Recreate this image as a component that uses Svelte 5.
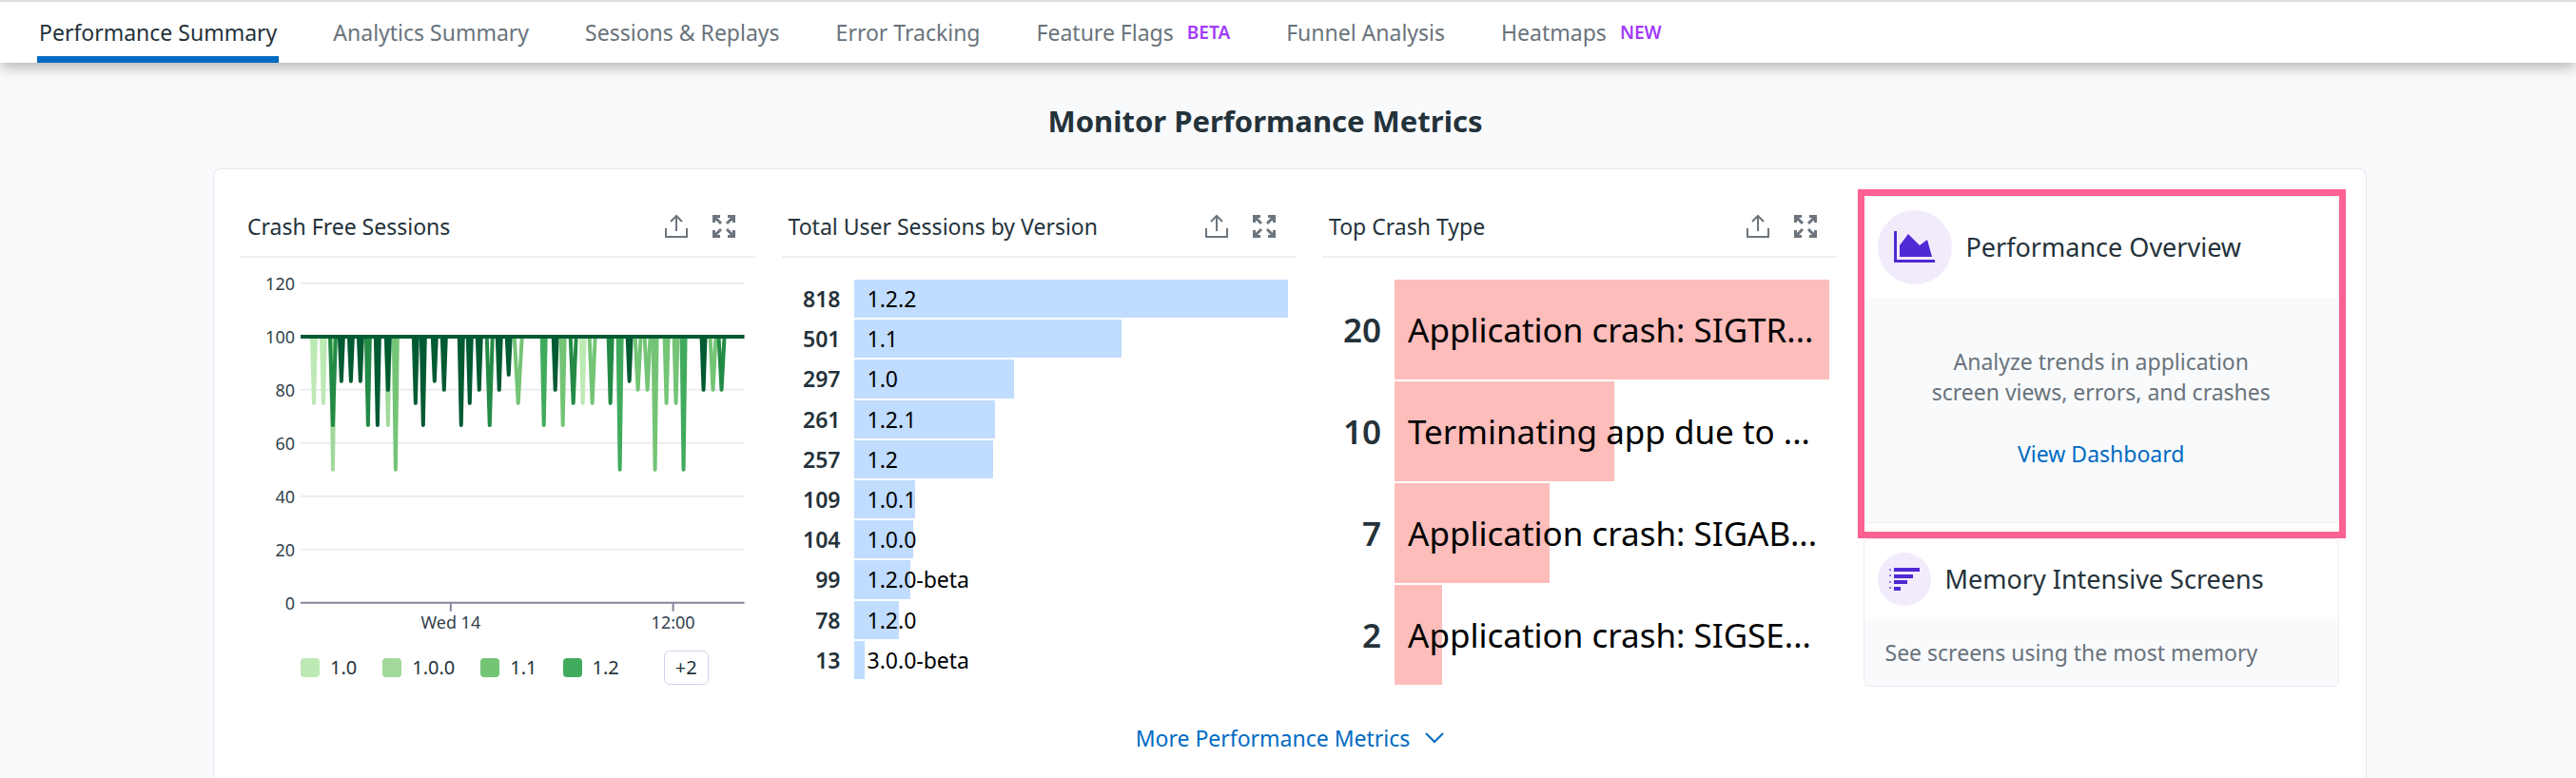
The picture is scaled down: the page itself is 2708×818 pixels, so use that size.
<script>
  const tabs = [
    { label: 'Performance Summary', active: true },
    { label: 'Analytics Summary' },
    { label: 'Sessions & Replays' },
    { label: 'Error Tracking' },
    { label: 'Feature Flags', tag: 'BETA' },
    { label: 'Funnel Analysis' },
    { label: 'Heatmaps', tag: 'NEW' }
  ];

  const versions = [
    [818, '1.2.2'], [501, '1.1'], [297, '1.0'], [261, '1.2.1'], [257, '1.2'],
    [109, '1.0.1'], [104, '1.0.0'], [99, '1.2.0-beta'], [78, '1.2.0'], [13, '3.0.0-beta']
  ];
  const crashes = [
    [20, 'Application crash: SIGTR...'],
    [10, 'Terminating app due to ...'],
    [7, 'Application crash: SIGAB...'],
    [2, 'Application crash: SIGSE...']
  ];
  // Every bar keeps a 1% stub so that small counts stay visible.
  const share = (value, max) => 1 + (99 * value) / max;

  const greens = { a: '#bce9b4', b: '#a1d99b', c: '#74c476', d: '#41ab5d', e: '#238b45', f: '#005a32' };
  const legend = [['1.0', greens.a], ['1.0.0', greens.b], ['1.1', greens.c], ['1.2', greens.d]];

  const yOf = (v) => 363 - 2.8 * v;
  const gridValues = [120, 100, 80, 60, 40, 20];
  // x position, lowest value, series, half width of the dip
  const dips = [
    [77, 75, 'a', 2], [87, 75, 'a', 2], [97, 50, 'b', 2], [97, 66.7, 'e', 3],
    [106, 83.3, 'f', 2], [116, 83.3, 'f', 2], [126, 83.3, 'f', 2], [134, 66.7, 'e', 2],
    [144, 66.7, 'f', 2], [155, 66.7, 'b', 2], [155, 80, 'f', 2], [163, 50, 'c', 2],
    [184, 75, 'f', 2], [192, 66.7, 'f', 2], [204, 83.3, 'f', 2], [214, 80, 'f', 2],
    [232, 66.7, 'f', 2], [241, 75, 'f', 2], [251, 80, 'f', 2], [262, 66.7, 'e', 3],
    [272, 80, 'f', 2], [282, 85.7, 'f', 2], [292, 75, 'c', 4], [319, 66.7, 'd', 2],
    [331, 80, 'f', 2], [339, 66.7, 'c', 2], [350, 75, 'e', 3], [360, 75, 'a', 2],
    [370, 75, 'c', 3], [389, 75, 'e', 2], [399, 50, 'd', 2], [409, 83.3, 'f', 2],
    [418, 80, 'c', 3], [428, 80, 'c', 3], [436, 50, 'c', 2], [448, 75, 'c', 2],
    [458, 75, 'c', 2], [466, 50, 'd', 2], [487, 80, 'f', 2], [497, 80, 'c', 3],
    [506, 80, 'e', 3]
  ];
</script>

{#snippet tools(name)}
  <div class="tools">
    <button aria-label="Share {name}">
      <svg width="26" height="26" viewBox="0 0 26 26" fill="none" stroke="#6c757d" stroke-width="2">
        <path d="M2 15V24H24V15M13 18V2M7 8L13 2L19 8" />
      </svg>
    </button>
    <button aria-label="Expand {name}">
      <svg width="26" height="26" viewBox="0 0 26 26" fill="none" stroke="#6c757d" stroke-width="3">
        <path d="M2.500 9V2.500H9M3 3L10 10M17 2.500H23.500V9M23 3L16 10M2.500 17V23.500H9M3 23L10 16M17 23.500H23.500V17M23 23L16 16" />
      </svg>
    </button>
  </div>
{/snippet}

{#snippet toplist(rows, kind)}
  <ol class="toplist {kind}">
    {#each rows as [count, label]}
      <li>
        <strong>{count}</strong>
        <div class="track">
          <div class="bar" style="width: {share(count, rows[0][0])}%"><span>{label}</span></div>
        </div>
      </li>
    {/each}
  </ol>
{/snippet}

<div class="page">
  <nav>
    {#each tabs as tab}
      <a href="#top" class:active={tab.active}>{tab.label}{#if tab.tag}<span class="tag">{tab.tag}</span>{/if}</a>
    {/each}
  </nav>

  <main>
    <h1>Monitor Performance Metrics</h1>

    <div class="panel">
      <div class="columns">
        <section>
          <header><h2>Crash Free Sessions</h2>{@render tools('Crash Free Sessions')}</header>
          <svg class="chart" viewBox="0 0 541 400" role="img" aria-label="Crash free sessions by version">
            {#each gridValues as v}
              <line x1="63" x2="530" y1={yOf(v)} y2={yOf(v)} stroke="#ececee" stroke-width="2" />
              <text x="57" y={yOf(v) + 7} text-anchor="end">{v}</text>
            {/each}
            <text x="57" y={yOf(0) + 7} text-anchor="end">0</text>
            {#each dips as [x, low, series, half]}
              <polyline
                points="{x - half},{yOf(100)} {x},{yOf(low)} {x + half},{yOf(100)}"
                fill="none" stroke={greens[series]} stroke-width="4" stroke-linecap="round" stroke-linejoin="round" />
            {/each}
            <line x1="63" x2="530" y1={yOf(100)} y2={yOf(100)} stroke={greens.f} stroke-width="4" />
            <path d="M63 363H530M221 363V372M455 363V372" stroke="#85869b" stroke-width="2" />
            <text x="221" y="390" text-anchor="middle">Wed 14</text>
            <text x="455" y="390" text-anchor="middle">12:00</text>
          </svg>
          <div class="legend">
            {#each legend as [name, color]}
              <span class="key"><i style="background: {color}"></i>{name}</span>
            {/each}
            <button class="more-keys">+2</button>
          </div>
        </section>

        <section>
          <header><h2>Total User Sessions by Version</h2>{@render tools('Total User Sessions by Version')}</header>
          {@render toplist(versions, 'blue')}
        </section>

        <section>
          <header><h2>Top Crash Type</h2>{@render tools('Top Crash Type')}</header>
          {@render toplist(crashes, 'red')}
        </section>

        <aside>
          <article class="card featured">
            <div class="card-head">
              <span class="disc large">
                <svg width="44" height="34" viewBox="0 0 44 34" fill="#4f29d3">
                  <path d="M0 0H3V30H43V33H0Z" />
                  <path d="M6 15L15 3L27 15L35 9L40 27H6Z" />
                </svg>
              </span>
              <h3>Performance Overview</h3>
            </div>
            <div class="card-body centered">
              <p>Analyze trends in application<br />screen views, errors, and crashes</p>
              <a href="#dashboard">View Dashboard</a>
            </div>
          </article>
          <article class="card">
            <div class="card-head">
              <span class="disc">
                <svg width="32" height="24" viewBox="0 0 32 24" fill="#4f29d3">
                  <path d="M5 0H32V4H5ZM5 7H25V11H5ZM5 13H19V17H5ZM5 20H12V24H5Z" />
                  <path d="M0 1H2V3H0ZM0 7H2V9H0ZM0 14H2V16H0ZM0 20H2V22H0Z" opacity="0.6" />
                </svg>
              </span>
              <h3>Memory Intensive Screens</h3>
            </div>
            <div class="card-body"><p>See screens using the most memory</p></div>
          </article>
        </aside>
      </div>

      <button class="more">
        More Performance Metrics
        <svg width="20" height="12" viewBox="0 0 20 12" fill="none" stroke="#006bc2" stroke-width="2"><path d="M1 1L10 10L19 1" /></svg>
      </button>
    </div>
  </main>
</div>

<style>
  :global(body) {
    background: #f9fafc;
    overflow: hidden;
  }
  .page {
    min-height: 100vh;
    display: flex;
    flex-direction: column;
    font-family: 'Noto Sans', sans-serif;
    font-size: 23px;
    line-height: 32px;
    color: #24323a;
  }
  a {
    color: #006bc2;
    text-decoration: none;
  }
  button {
    font: inherit;
    background: none;
    border: 0;
    padding: 0;
    cursor: pointer;
  }
  h1, h2, h3, p, ol {
    margin: 0;
    padding: 0;
  }
  nav {
    display: flex;
    gap: 55px;
    height: 64px;
    padding: 0 39px;
    border-top: 2px solid #dcdcdc;
    background: #fff;
    box-shadow: 0 4px 14px rgba(0, 0, 0, 0.3);
  }
  nav a {
    display: flex;
    align-items: center;
    box-sizing: border-box;
    padding: 7px 2px 0;
    border-bottom: 7px solid transparent;
    color: #69737b;
  }
  nav a.active {
    color: #24323a;
    border-color: #006bc2;
  }
  .tag {
    margin-left: 14px;
    font-size: 19px;
    font-weight: 600;
    color: #a23bf8;
  }
  main {
    flex: 1;
    display: flex;
    flex-direction: column;
    padding: 39px 220px 0 224px;
  }
  h1 {
    padding-right: 52px;
    text-align: center;
    font-size: 31px;
    line-height: 44px;
    font-weight: 700;
  }
  .panel {
    flex: 1;
    margin-top: 28px;
    padding: 28px 28px 0;
    background: #fff;
    border: 1px solid #e8e9f1;
    border-bottom: 0;
    border-radius: 8px 8px 0 0;
    text-align: center;
  }
  .columns {
    display: grid;
    grid-template-columns: 540fr 540fr 540fr 500fr;
    gap: 28px;
    text-align: left;
  }
  section {
    min-width: 0;
  }
  header {
    display: flex;
    align-items: center;
    justify-content: space-between;
    height: 63px;
    padding: 0 20px 0 7px;
    border-bottom: 2px solid #f0f0f5;
  }
  h2 {
    font-size: 23px;
    font-weight: 400;
  }
  .tools {
    display: flex;
    gap: 24px;
  }
  .tools svg, .chart, .disc svg {
    display: block;
  }
  .chart {
    width: 100%;
    height: auto;
    font-size: 18px;
    fill: #33414a;
  }
  .legend {
    display: flex;
    align-items: center;
    gap: 27px;
    margin-top: 13px;
    padding-left: 63px;
    font-size: 20px;
  }
  .key {
    display: flex;
    align-items: center;
    gap: 11px;
  }
  .key i {
    width: 20px;
    height: 20px;
    border-radius: 4px;
  }
  .more-keys {
    box-sizing: border-box;
    width: 47px;
    height: 36px;
    margin-left: 20px;
    border: 1px solid #cfd3e8;
    border-radius: 6px;
    color: #24323a;
  }
  .toplist {
    display: grid;
    grid-auto-rows: 1fr;
    gap: 2px;
    margin-top: 23px;
    padding-right: 8px;
    list-style: none;
  }
  .toplist li {
    display: grid;
    grid-template-columns: 62px 1fr;
    gap: 14px;
  }
  .toplist strong {
    align-self: center;
    text-align: right;
    font-weight: 600;
  }
  .bar {
    display: flex;
    align-items: center;
    height: 100%;
    color: #000;
    white-space: nowrap;
  }
  .bar span {
    padding-left: 14px;
  }
  .blue {
    height: 420px;
  }
  .blue .bar {
    background: #c0dcfe;
  }
  .red {
    height: 426px;
    font-size: 35px;
  }
  .red .bar {
    background: #fcbdbb;
  }
  aside {
    display: flex;
    flex-direction: column;
    gap: 16px;
  }
  .card {
    position: relative;
    border: 1px solid #ebebf2;
    border-radius: 6px;
  }
  .featured::after {
    content: '';
    position: absolute;
    z-index: 1;
    inset: -8px -8px -17px -7px;
    border: 7px solid #fe6192;
    pointer-events: none;
  }
  .card-head {
    display: flex;
    align-items: center;
    gap: 15px;
    padding: 14px;
  }
  .disc {
    display: grid;
    place-items: center;
    width: 56px;
    height: 56px;
    border-radius: 50%;
    background: #f2ebfc;
  }
  .disc.large {
    width: 78px;
    height: 78px;
  }
  h3 {
    font-size: 27px;
    line-height: 36px;
    font-weight: 400;
  }
  .card-body {
    padding: 19px 22px;
    border-radius: 6px;
    background: #f9fafc;
    color: #69737b;
  }
  .centered {
    display: flex;
    flex-direction: column;
    align-items: center;
    gap: 33px;
    padding: 51px 22px 56px;
    text-align: center;
  }
  .more {
    display: inline-flex;
    align-items: center;
    gap: 16px;
    margin-top: 38px;
    color: #006bc2;
  }
</style>
